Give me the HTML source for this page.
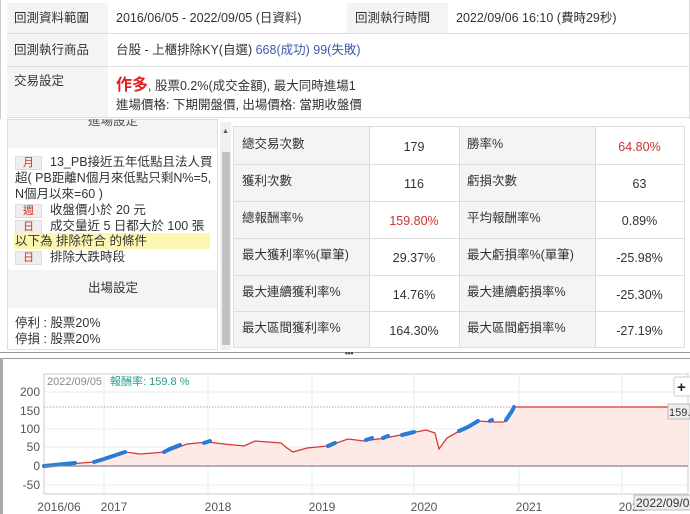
<!DOCTYPE html>
<html><head><meta charset="utf-8"><style>
*{margin:0;padding:0;box-sizing:border-box}
body{width:690px;height:514px;overflow:hidden;background:#fff;font-family:"Liberation Sans","Noto Sans CJK TC",sans-serif;font-size:12.5px;line-height:15px;color:#333;position:relative}
.a{position:absolute;white-space:nowrap}
.g{background:#f4f4f4}
.t{position:absolute;left:15px;width:27px;height:14px;background:#eee;border:1px solid #ddd;color:#c33;font-size:11px;text-align:center;line-height:12px}
</style></head><body>
<!-- top table -->
<div class="a" style="left:0;top:0;width:690px;height:119px;border-left:1px solid #ccc;border-right:1px solid #ddd"></div>
<div class="a g" style="left:7px;top:3px;width:101px;height:115px"></div>
<div class="a g" style="left:347px;top:3px;width:101px;height:30px"></div>
<div class="a" style="left:7px;top:33px;width:683px;height:1px;background:#ddd"></div>
<div class="a" style="left:7px;top:66px;width:683px;height:1px;background:#ddd"></div>
<div class="a" style="left:7px;top:117px;width:683px;height:1px;background:#ddd"></div>
<div class="a" style="left:14px;top:11px">回測資料範圍</div>
<div class="a" style="left:116px;top:11px">2016/06/05 - 2022/09/05 (日資料)</div>
<div class="a" style="left:355px;top:11px">回測執行時間</div>
<div class="a" style="left:456px;top:11px">2022/09/06 16:10 (費時29秒)</div>
<div class="a" style="left:14px;top:43px">回測執行商品</div>
<div class="a" style="left:116px;top:43px">台股 - 上櫃排除KY(自選) <span style="color:#3a5aa8">668(成功) 99(失敗)</span></div>
<div class="a" style="left:14px;top:74px">交易設定</div>
<div class="a" style="left:116px;top:77px;line-height:18px"><b style="color:#d22;font-size:16px">作多</b>, 股票0.2%(成交金額), 最大同時進場1</div>
<div class="a" style="left:116px;top:98px">進場價格: 下期開盤價, 出場價格: 當期收盤價</div>
<!-- left panel -->
<div class="a g" style="left:7px;top:119px;width:211px;height:231px;border:1px solid #ddd"></div>
<div class="a" style="left:8px;top:148px;width:209px;height:122px;background:#fff"></div>
<div class="a" style="left:8px;top:308px;width:209px;height:41px;background:#fff"></div>
<div class="a" style="left:88px;top:119px;color:#555;height:9px;overflow:hidden;line-height:4px">進場設定</div>
<div class="t" style="top:156px">月</div><div class="a" style="left:50px;top:155px">13_PB接近五年低點且法人買</div>
<div class="a" style="left:15px;top:171px">超( PB距離N個月來低點只剩N%=5,</div>
<div class="a" style="left:15px;top:187px">N個月以來=60 )</div>
<div class="t" style="top:204px">週</div><div class="a" style="left:50px;top:203px">收盤價小於 20 元</div>
<div class="t" style="top:220px">日</div><div class="a" style="left:50px;top:219px">成交量近 5 日都大於 100 張</div>
<div class="a" style="left:14px;top:233px;width:196px;height:16px;background:#fdf6b0"></div>
<div class="a" style="left:15px;top:234px">以下為 排除符合 的條件</div>
<div class="t" style="top:251px">日</div><div class="a" style="left:50px;top:250px">排除大跌時段</div>
<div class="a" style="left:88px;top:281px">出場設定</div>
<div class="a" style="left:15px;top:316px">停利 : 股票20%</div>
<div class="a" style="left:15px;top:332px">停損 : 股票20%</div>
<!-- scrollbar -->
<div class="a" style="left:220px;top:122px;width:11px;height:228px;background:#f0f0f0"></div>
<div class="a" style="left:222px;top:152px;width:8px;height:193px;background:#c2c2c2"></div>
<div class="a" style="left:222px;top:124px;font-size:7px;color:#555">▲</div>
<!-- stats -->
<div class="a" style="left:233px;top:126px;width:452px;height:222px;border:1px solid #ddd"></div>
<div class="a g" style="left:234px;top:127px;width:135px;height:220px"></div>
<div class="a g" style="left:459px;top:127px;width:136px;height:220px"></div>
<div class="a" style="left:369px;top:127px;width:1px;height:220px;background:#ddd"></div>
<div class="a" style="left:459px;top:127px;width:1px;height:220px;background:#ddd"></div>
<div class="a" style="left:595px;top:127px;width:1px;height:220px;background:#ddd"></div>
<div class="a" style="left:234px;top:164px;width:450px;height:1px;background:#ddd"></div>
<div class="a" style="left:234px;top:201px;width:450px;height:1px;background:#ddd"></div>
<div class="a" style="left:234px;top:238px;width:450px;height:1px;background:#ddd"></div>
<div class="a" style="left:234px;top:275px;width:450px;height:1px;background:#ddd"></div>
<div class="a" style="left:234px;top:311px;width:450px;height:1px;background:#ddd"></div>
<div class="a" style="left:242px;top:137px">總交易次數</div><div class="a" style="left:369px;width:90px;text-align:center;top:140px">179</div>
<div class="a" style="left:467px;top:137px">勝率%</div><div class="a" style="left:595px;width:89px;text-align:center;top:140px;color:#c33">64.80%</div>
<div class="a" style="left:242px;top:174px">獲利次數</div><div class="a" style="left:369px;width:90px;text-align:center;top:177px">116</div>
<div class="a" style="left:467px;top:174px">虧損次數</div><div class="a" style="left:595px;width:89px;text-align:center;top:177px">63</div>
<div class="a" style="left:242px;top:211px">總報酬率%</div><div class="a" style="left:369px;width:90px;text-align:center;top:214px;color:#c33">159.80%</div>
<div class="a" style="left:467px;top:211px">平均報酬率%</div><div class="a" style="left:595px;width:89px;text-align:center;top:214px">0.89%</div>
<div class="a" style="left:242px;top:248px">最大獲利率%(單筆)</div><div class="a" style="left:369px;width:90px;text-align:center;top:251px">29.37%</div>
<div class="a" style="left:467px;top:248px">最大虧損率%(單筆)</div><div class="a" style="left:595px;width:89px;text-align:center;top:251px">-25.98%</div>
<div class="a" style="left:242px;top:285px">最大連續獲利率%</div><div class="a" style="left:369px;width:90px;text-align:center;top:288px">14.76%</div>
<div class="a" style="left:467px;top:285px">最大連續虧損率%</div><div class="a" style="left:595px;width:89px;text-align:center;top:288px">-25.30%</div>
<div class="a" style="left:242px;top:321px">最大區間獲利率%</div><div class="a" style="left:369px;width:90px;text-align:center;top:324px">164.30%</div>
<div class="a" style="left:467px;top:321px">最大區間虧損率%</div><div class="a" style="left:595px;width:89px;text-align:center;top:324px">-27.19%</div>
<!-- divider -->
<div class="a" style="left:0;top:352px;width:690px;height:1px;background:#999"></div>
<div class="a" style="left:0;top:358px;width:690px;height:1px;background:#999"></div>
<div class="a" style="left:345px;top:350px;font-size:8px;font-weight:bold;line-height:8px">•••</div>
<div class="a" style="left:0;top:358px;width:3px;height:156px;background:#aaa"></div>
<!-- chart -->
<svg class="a" style="left:0;top:359px" width="690" height="155" viewBox="0 359 690 155">
<rect x="44" y="374" width="644" height="120" fill="#fff" stroke="#ccc"/>
<g stroke="#e6edf2" stroke-width="1">
<line x1="44" y1="392" x2="688" y2="392"/><line x1="44" y1="429" x2="688" y2="429"/><line x1="44" y1="447" x2="688" y2="447"/><line x1="44" y1="485" x2="688" y2="485"/>
<line x1="104" y1="374" x2="104" y2="494"/><line x1="208" y1="374" x2="208" y2="494"/><line x1="312" y1="374" x2="312" y2="494"/><line x1="414" y1="374" x2="414" y2="494"/><line x1="519" y1="374" x2="519" y2="494"/><line x1="622" y1="374" x2="622" y2="494"/>
</g>
<line x1="44" y1="407" x2="688" y2="407" stroke="#aaa" stroke-dasharray="1.5 1.5"/>
<polygon fill="#fdeae7" points="44,466 94,462 104,459 125,452 140,454 166,452 187,444 208,442 224,444 244,446 255,441 281,443 287,448 293,452 307,448 328,446 348,439 364,441 385,438 411,433 426,430 435,433 439,449 447,438 463,429 478,421 494,422 504,422 510,414 514,407 688,407 688,466"/>
<polyline fill="none" stroke="#d33" stroke-width="1.3" points="44,466 94,462 104,459 125,452 140,454 166,452 187,444 208,442 224,444 244,446 255,441 281,443 287,448 293,452 307,448 328,446 348,439 364,441 385,438 411,433 426,430 435,433 439,449 447,438 463,429 478,421 494,422 504,422 510,414 514,407 668,407"/>
<g fill="none" stroke="#2a7ad8" stroke-width="4" stroke-linecap="round">
<polyline points="44,466 75,463"/><polyline points="94,462 104,459 125,452"/><polyline points="164,452 170,449 180,445"/><polyline points="188,444"/><polyline points="204,443 210,441"/>
<polyline points="328,446 335,443"/><polyline points="366,440 372,438"/><polyline points="383,438 388,436"/><polyline points="402,435 414,432"/><polyline points="420,431"/>
<polyline points="459,431 468,427 478,421"/><polyline points="490,421 492,420"/><polyline points="506,420 512,411 514,407"/>
</g>
<rect x="668" y="404" width="22" height="15" fill="#eee" stroke="#bbb"/>
<text x="669" y="416" font-size="11" fill="#333">159.</text>
<rect x="674" y="377" width="18" height="19" fill="#fff" stroke="#ccc" rx="2"/>
<text x="677" y="392" font-size="15" font-weight="bold" fill="#222">+</text>
<line x1="44" y1="466" x2="688" y2="466" stroke="#888" stroke-width="1.3"/>
<text x="47" y="385" font-size="11" fill="#888">2022/09/05</text>
<text x="110" y="385" font-size="11" fill="#2a9a8a">報酬率: 159.8 %</text>
<g font-size="12" fill="#555" text-anchor="end">
<text x="40" y="396">200</text><text x="40" y="415">150</text><text x="40" y="433">100</text><text x="40" y="451">50</text><text x="40" y="470">0</text><text x="40" y="489">-50</text>
</g>
<g font-size="12" fill="#555" text-anchor="middle">
<text x="59" y="511">2016/06</text><text x="114" y="511">2017</text><text x="218" y="511">2018</text><text x="322" y="511">2019</text><text x="424" y="511">2020</text><text x="529" y="511">2021</text><text x="632" y="511">2022</text>
</g>
<rect x="634" y="495" width="58" height="15" fill="#eee" stroke="#bbb"/>
<text x="636" y="507" font-size="12" fill="#333">2022/09/05</text>
</svg>
</body></html>
